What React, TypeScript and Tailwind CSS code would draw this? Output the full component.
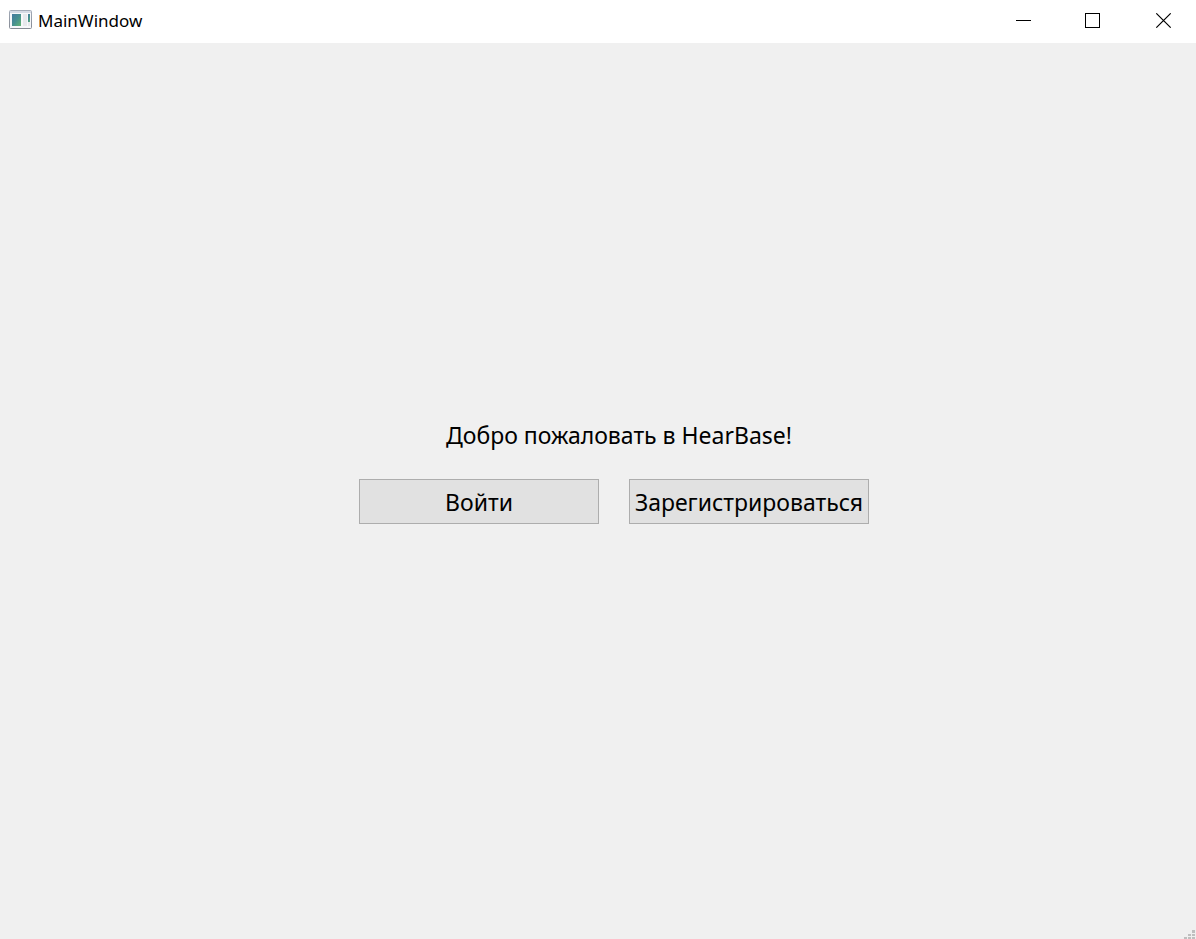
import React from "react";

function AppIcon() {
  return (
    <svg width="24" height="20" viewBox="0 0 24 20" aria-hidden="true">
      <defs>
        <linearGradient id="pane" x1="0" y1="0" x2="1" y2="1">
          <stop offset="0" stopColor="#4379a0" />
          <stop offset="0.5" stopColor="#468f90" />
          <stop offset="1" stopColor="#62b472" />
        </linearGradient>
        <linearGradient id="frame" x1="0" y1="0" x2="0" y2="1">
          <stop offset="0" stopColor="#a3abb8" />
          <stop offset="1" stopColor="#858a94" />
        </linearGradient>
      </defs>
      <rect x="0.5" y="0.5" width="22" height="18" rx="1" fill="#f6f7fa" stroke="url(#frame)" />
      <rect x="1" y="1" width="21" height="2" fill="#d5dae5" />
      <rect x="3" y="4" width="9" height="12" fill="url(#pane)" />
      <rect x="14" y="4" width="4" height="12" fill="#e6e8ec" />
      <rect x="19" y="4" width="2" height="8" fill="url(#pane)" />
      <rect x="19" y="12" width="2" height="4" fill="#e6e8ec" />
    </svg>
  );
}

function CaptionButton({ label, children }: { label: string; children: React.ReactNode }) {
  return (
    <button type="button" aria-label={label} className="flex h-10 items-center">
      <svg width="17" height="15" viewBox="0 0 17 15" fill="none" stroke="#000">
        {children}
      </svg>
    </button>
  );
}

function TitleBar() {
  return (
    <header className="flex h-[43px] shrink-0 items-start justify-between bg-white pr-6 pl-[9px]">
      <div className="flex h-10 items-center gap-[5px]">
        <AppIcon />
        <h1 className="pt-0.5 text-[17px] leading-6">MainWindow</h1>
      </div>
      <div className="flex gap-[53px]">
        <CaptionButton label="Minimize">
          <path d="M1 7.5H16" />
        </CaptionButton>
        <CaptionButton label="Maximize">
          <rect x="0.5" y="0.5" width="14" height="14" />
        </CaptionButton>
        <CaptionButton label="Close">
          <path d="M1.3 0.3L15.7 14.7M15.7 0.3L1.3 14.7" strokeWidth="1.1" />
        </CaptionButton>
      </div>
    </header>
  );
}

function ActionButton({ children }: { children: React.ReactNode }) {
  return (
    <button
      type="button"
      className="h-[45px] w-60 border border-[#adadad] bg-[#e1e1e1] text-[23px] leading-8 whitespace-nowrap hover:border-[#0078d7] hover:bg-[#e5f1fb]"
    >
      {children}
    </button>
  );
}

function SizeGrip() {
  return (
    <svg width="12" height="9" viewBox="0 0 12 9" fill="#bfbfbf" aria-hidden="true">
      <rect x="8" y="0" width="3" height="3" />
      <rect x="4" y="4" width="3" height="2" />
      <rect x="8" y="4" width="3" height="2" />
      <rect x="0" y="7" width="3" height="2" />
      <rect x="4" y="7" width="3" height="2" />
      <rect x="8" y="7" width="3" height="2" />
    </svg>
  );
}

export default function App() {
  return (
    <div className="flex min-h-screen flex-col bg-[#f0f0f0] font-['Noto_Sans','Open_Sans',sans-serif] text-black">
      <TitleBar />
      <main className="flex grow flex-col items-center justify-center gap-7 pt-1.5 pb-9 pl-8">
        <p className="pl-[10px] text-[23px] leading-8">Добро пожаловать в HearBase!</p>
        <div className="flex flex-wrap justify-center gap-[30px]">
          <ActionButton>Войти</ActionButton>
          <ActionButton>Зарегистрироваться</ActionButton>
        </div>
      </main>
      <footer className="flex justify-end">
        <SizeGrip />
      </footer>
    </div>
  );
}
